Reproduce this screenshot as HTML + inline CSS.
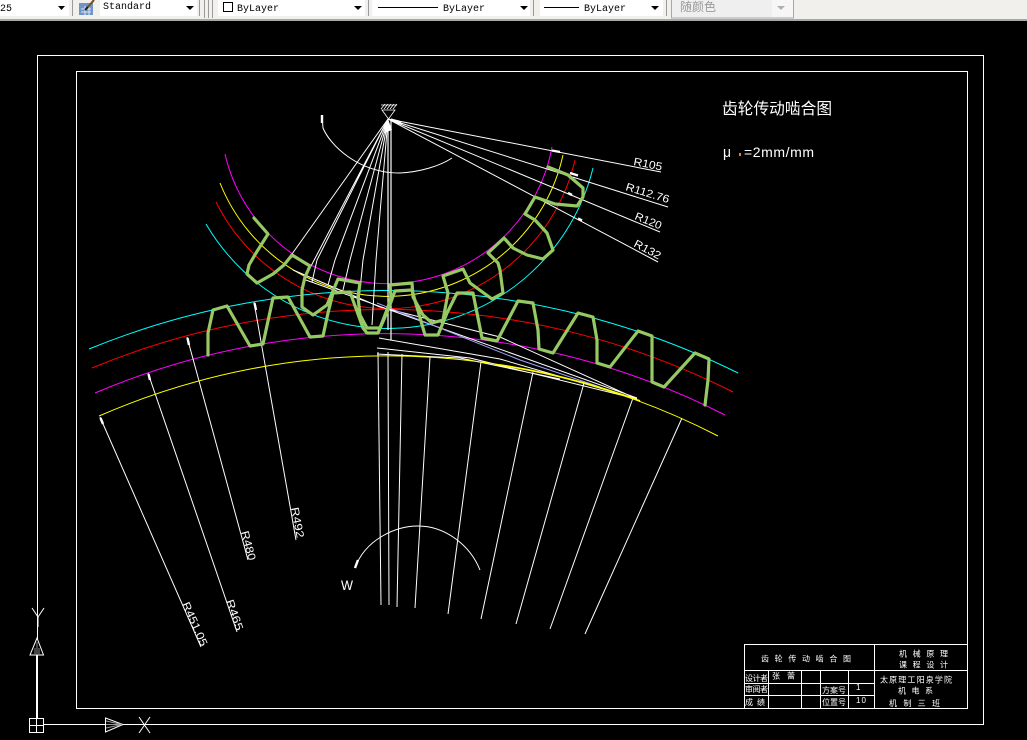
<!DOCTYPE html>
<html>
<head>
<meta charset="utf-8">
<style>
html,body{margin:0;padding:0;background:#000;width:1027px;height:740px;overflow:hidden}
svg{position:absolute;left:0;top:0;display:block}
text{font-family:"Liberation Sans","Noto Sans CJK SC",sans-serif;fill:#fff}
.m{font-family:"Liberation Mono","Noto Sans CJK SC",monospace;fill:#000;font-size:10px}
.w{fill:none;stroke:#fff;stroke-width:1}
.a{fill:none;stroke-width:1}
.g{fill:none;stroke:#96c864;stroke-width:3.200;stroke-linejoin:round;stroke-linecap:round}
.c{font-family:"Noto Sans CJK SC",sans-serif;font-size:8px}
.d{font-size:11px;font-weight:400;fill:#e8e8e8}
</style>
</head>
<body>
<svg width="1027" height="740" viewBox="0 0 1027 740" xmlns="http://www.w3.org/2000/svg">
<!-- toolbar -->
<rect x="0" y="0" width="1027" height="19" fill="#f1f0ec"/>
<rect x="0" y="19" width="1027" height="2" fill="#a8a8a8"/>
<rect x="0" y="0" width="69" height="16" fill="#fff"/>
<rect x="100" y="0" width="97" height="16" fill="#fff"/>
<rect x="218" y="0" width="147" height="16" fill="#fff"/>
<rect x="372" y="0" width="158" height="16" fill="#fff"/>
<rect x="540" y="0" width="123" height="16" fill="#fff"/>
<rect x="671.5" y="-1" width="122" height="19" fill="#efefef" stroke="#a8a8a8"/>
<rect x="772" y="0" width="21" height="17" fill="#f6f6f6"/>
<g fill="#9a9a9a">
<rect x="72" y="0" width="1" height="16"/><rect x="199" y="0" width="1" height="16"/><rect x="204" y="0" width="1" height="18"/><rect x="208" y="0" width="1" height="18"/><rect x="212" y="0" width="1" height="18"/><rect x="368" y="0" width="1" height="16"/><rect x="533" y="0" width="1" height="16"/><rect x="666" y="0" width="1" height="16"/>
</g>
<!-- icon -->
<rect x="79" y="3" width="14" height="12" fill="#6f94c6"/>
<path d="M81 9H91M81 12H91M85 6V15M89 6V15" stroke="#dbe6f3" stroke-width="1"/>
<path d="M87 8L94 0" stroke="#7a4b20" stroke-width="2"/><path d="M85 10L88 7" stroke="#222" stroke-width="2"/>
<!-- arrows -->
<g fill="#000">
<path d="M58 6h7l-3.500 4z"/><path d="M186 6h8l-4 4z"/><path d="M354 6h8l-4 4z"/><path d="M520 6h8l-4 4z"/><path d="M651 6h8l-4 4z"/>
</g>
<path d="M777 6h8l-4 4z" fill="#b0b0b0"/>
<text class="m" x="0" y="11">25</text>
<text class="m" x="103" y="9">Standard</text>
<rect x="223.500" y="2.500" width="9" height="9" fill="#fff" stroke="#000"/>
<text class="m" x="237" y="11">ByLayer</text>
<rect x="378" y="7" width="60" height="1" fill="#000"/>
<text class="m" x="443" y="11">ByLayer</text>
<rect x="544" y="7" width="35" height="1" fill="#000"/>
<text class="m" x="584" y="11">ByLayer</text>
<text x="680" y="11" style="font-family:'Noto Sans CJK SC',sans-serif;font-size:12px;fill:#9a9a9a">随颜色</text>

<!-- frames -->
<g shape-rendering="crispEdges">
<rect class="w" x="37.500" y="55.500" width="946" height="669"/>
<rect class="w" x="76.500" y="71.500" width="891" height="637"/>
<!-- title block -->
<path class="w" d="M744.500 708.500V644.500H967.500M744.500 670.500H967.500M874.500 644.500V708.500M744.500 683.500H874.500M744.500 695.500H874.500M768.500 670.500V708.500M801.500 670.500V708.500M820.500 670.500V708.500M848.500 670.500V708.500"/>
</g>

<!-- pinion arcs -->
<path class="a" stroke="#ff00ff" d="M225 154A167 167 0 0 0 552 147"/>
<path class="a" stroke="#ffff00" d="M220 183A180 180 0 0 0 563 155"/>
<path class="a" stroke="#ff0000" d="M216 202A192 192 0 0 0 575 160"/>
<path class="a" stroke="#00ffff" d="M206 224A211 211 0 0 0 593 168"/>
<!-- gear arcs -->
<path class="a" stroke="#ff00ff" d="M95 393A745 745 0 0 1 725 415"/>
<path class="a" stroke="#ff0000" d="M92 368A769 769 0 0 1 733 392"/>
<path class="a" stroke="#00ffff" d="M89 349A788 788 0 0 1 738 373"/>

<!-- fan lines -->
<g class="w">
<path d="M388 119L292 254M388 119L310 268M388 119L317 260L312 282M388 119L335 260L328 285M388 119L350 260L343 290M388 119L363 260L358 310M388 119L376 260L372 325"/>
<path d="M388 119V330M391 119V340" stroke-width="1.200"/>
<path d="M388 119L661 172M388 119L668 207M388 119L660 232M388 119L658 262"/>
<path d="M293 270L380 307L500 337L637 399M303 279L637 398M379 338L500 359L637 399M377 348L470 358L637 399M377 354L460 358L560 379"/>
<path d="M378 352L381 605M388 352L389 605M402 354L397 607M430 357L415 608M481 362L448 614M533 372L481 619M584 383L516 624M633 398L550 629M682 418L585 634"/>
<path d="M100 417L201 647M148 373L237 632M187 337L248 560M254 302L296 540"/>
<path d="M322 115L323 128C330 145 358 173 400 173C420 172 440 166 452 158"/>
<path d="M355 568C365 540 395 526 418 526C445 526 470 545 480 570"/>
</g>
<path d="M377 303L520 360L600 387" fill="none" stroke="#a0a0ff"/>
<path class="a" stroke="#ffff00" d="M99 416A722 722 0 0 1 718 436"/>
<path d="M500 365A722 722 0 0 1 640 401" fill="none" stroke="#ffff00" stroke-width="1.800"/>

<!-- arrowheads -->
<g stroke="#fff" stroke-width="2.400" fill="none">
<path d="M552 150.500L560 152M570 173L578 175.500M568 193L572 195M578 218.500L582 220.500"/>
<path d="M100.500 418L103 424M148.500 374L150 380M187.500 338L189 345M254.500 303L256 310"/>
<path d="M322 115V123M355 568L358 560"/>
</g>

<!-- apex symbol -->
<path d="M382 110H395L388.500 119ZM381 109L385 104M384 109L388 104M387 109L391 104M390 109L394 104M393 109L397 104M381 105H397" fill="none" stroke="#fff" stroke-width=".8"/>
<path d="M384 133L388 119L392 130Z" fill="#fff"/>
<path d="M391 119L402 124L399 121L391 119Z" fill="#fff" stroke="#fff"/>

<!-- pinion teeth -->
<polyline class="g" points="254,218 268,234 256,253 249,265 247,274 257,283 273,274 284,265 292,255 310,266 305,277 302,290 302,307 313,315 327,305 338,279 360,283 358,297 360,315 367,328 380,328 388,307 391,297 390,285 412,283 413,297 423,315 432,323 443,320 448,293 443,276 463,269 470,283 492,299 503,293 500,270 498,263 488,253 504,238 513,248 527,255 543,259 553,250 547,233 535,220 525,214 535,197 555,204 577,206 583,197 583,188 568,175 548,167"/>
<!-- gear teeth -->
<polyline class="g" points="208,355 208,333 213,310 227,306 250,346 263,344 273,298 288,297 310,337 323,336 328,313 333,293 350,292 363,328 367,333 378,333 388,310 395,291 412,290 425,335 438,335 447,313 457,293 473,293 482,338 497,341 518,301 533,303 538,330 539,349 553,353 578,313 593,317 597,340 597,363 610,367 638,331 652,336 652,360 652,382 664,387 695,353 709,359 708,380 705,405"/>

<!-- dimension labels -->
<g class="d">
<text transform="translate(633,165) rotate(11)" textLength="29" lengthAdjust="spacingAndGlyphs">R105</text>
<text transform="translate(625,190) rotate(17)" textLength="45" lengthAdjust="spacingAndGlyphs">R112.76</text>
<text transform="translate(634,219) rotate(22)" textLength="28" lengthAdjust="spacingAndGlyphs">R120</text>
<text transform="translate(633,246) rotate(28)" textLength="29" lengthAdjust="spacingAndGlyphs">R132</text>
<text transform="translate(182,604) rotate(66)" textLength="47" lengthAdjust="spacingAndGlyphs">R451.05</text>
<text transform="translate(226,601) rotate(71)" textLength="32" lengthAdjust="spacingAndGlyphs">R465</text>
<text transform="translate(241,532) rotate(75)" textLength="30" lengthAdjust="spacingAndGlyphs">R480</text>
<text transform="translate(291,508) rotate(79)" textLength="31" lengthAdjust="spacingAndGlyphs">R492</text>
<text x="341" y="590" style="font-size:14px" textLength="12" lengthAdjust="spacingAndGlyphs">W</text>
</g>

<!-- heading -->
<text x="722" y="114" style="font-family:'WenQuanYi Zen Hei','Noto Sans CJK SC',sans-serif;font-size:15.700px" textLength="110">齿轮传动啮合图</text>
<text x="723" y="157" style="font-size:15px" textLength="8" lengthAdjust="spacingAndGlyphs">μ</text>
<rect x="739" y="153" width="2" height="3" fill="#e08030"/>
<text x="744" y="157" style="font-size:14px" textLength="70">=2mm/mm</text>

<!-- title block text -->
<g class="c">
<text x="761" y="661.500" textLength="90">齿轮传动啮合图</text>
<text x="899" y="656.500" textLength="49">机械原理</text>
<text x="899" y="667.500" textLength="49">课程设计</text>
<text x="745" y="681" textLength="23">设计者</text>
<text x="745" y="692" textLength="23">审阅者</text>
<text x="745" y="705" textLength="20">成绩</text>
<text x="772" y="678.500" textLength="23">张蕾</text>
<text x="822" y="693" textLength="24">方案号</text>
<text x="822" y="705" textLength="24">位置号</text>
<text x="856" y="690" style="font-family:'Liberation Sans',sans-serif">1</text>
<text x="856" y="703" style="font-family:'Liberation Sans',sans-serif" textLength="10">10</text>
<text x="880" y="682.500" textLength="72">太原理工阳泉学院</text>
<text x="898" y="693.500" textLength="35">机电系</text>
<text x="889" y="706" textLength="51">机制三班</text>
</g>

<!-- UCS -->
<path d="M37.500 590V655" stroke="#fff"/>
<g shape-rendering="crispEdges">
<rect x="36" y="655" width="2" height="63" fill="#fff"/>
<rect x="29.500" y="718.500" width="14" height="14" fill="#000" stroke="#fff"/>
<path d="M36.500 718V732M29 725.500H44" stroke="#fff"/>
</g>
<path d="M37 638L30 655H43.500Z" fill="#000" stroke="#fff"/>
<path d="M37 642V655M35 648V655M39 648V655" stroke="#888"/>
<path d="M105.500 718V732L123 724.500Z" fill="#000" stroke="#fff"/>
<path d="M106 721L122 724.500M106 724.500H122M106 728L122 724.500" stroke="#999"/>
<path d="M32 608L38 617L44 608M38 617V627" fill="none" stroke="#fff"/>
<path d="M139 717L150 733M150 717L139 733" stroke="#fff"/>
</svg>
</body>
</html>
